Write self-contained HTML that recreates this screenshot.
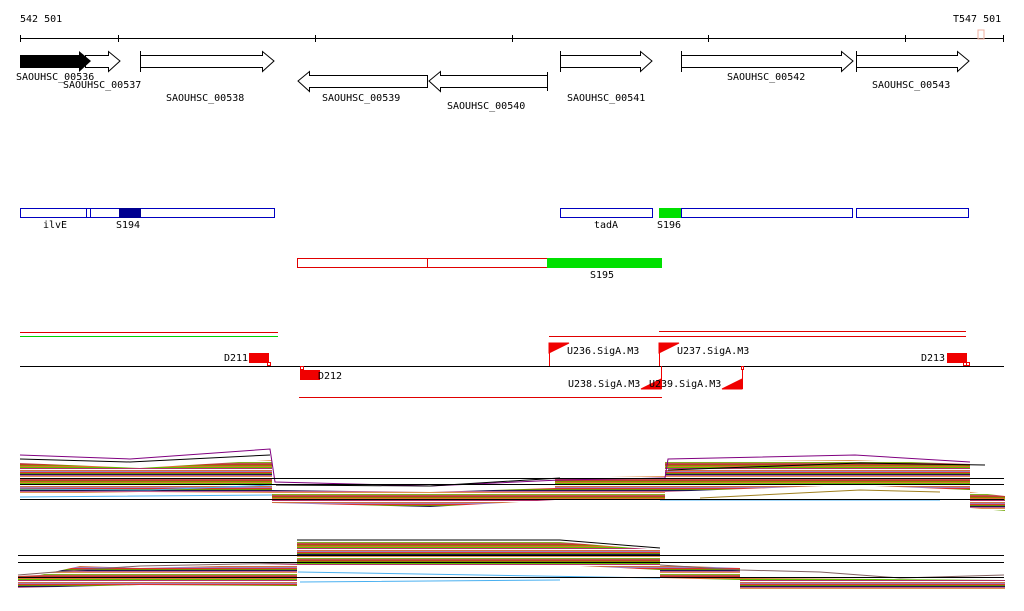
<!DOCTYPE html>
<html><head><style>
html,body{margin:0;padding:0;background:#fff;}
svg{display:block;font-family:"DejaVu Sans Mono","Liberation Mono",monospace;font-size:10px;}
</style></head><body>
<svg width="1024" height="611" viewBox="0 0 1024 611" xmlns="http://www.w3.org/2000/svg">
<defs>
<pattern id="st" width="8" height="16" patternUnits="userSpaceOnUse">
<rect width="8" height="16" fill="#d8a070"/>
<rect y="0" width="8" height="1" fill="#c0392b"/>
<rect y="1" width="8" height="1" fill="#8a8a00"/>
<rect y="2" width="8" height="1" fill="#e07030"/>
<rect y="3" width="8" height="1" fill="#60c000"/>
<rect y="4" width="8" height="1" fill="#b0306a"/>
<rect y="5" width="8" height="1" fill="#fff"/>
<rect y="6" width="8" height="1" fill="#d07040"/>
<rect y="7" width="8" height="1" fill="#a080c0"/>
<rect y="8" width="8" height="1" fill="#e03030"/>
<rect y="9" width="8" height="1" fill="#709000"/>
<rect y="10" width="8" height="1" fill="#1a1a50"/>
<rect y="11" width="8" height="1" fill="#c06090"/>
<rect y="12" width="8" height="1" fill="#e09050"/>
<rect y="13" width="8" height="1" fill="#fff"/>
<rect y="14" width="8" height="1" fill="#80b020"/>
<rect y="15" width="8" height="1" fill="#c05050"/>
</pattern>
</defs>
<!-- ruler -->
<text x="20" y="22">542 501</text>
<text x="953" y="22">T547 501</text>
<line x1="20" y1="38.5" x2="1004" y2="38.5" stroke="#000"/>
<g stroke="#000"><line x1="20.5" y1="35" x2="20.5" y2="42"/><line x1="118.5" y1="35" x2="118.5" y2="42"/><line x1="315.5" y1="35" x2="315.5" y2="42"/><line x1="512.5" y1="35" x2="512.5" y2="42"/><line x1="708.5" y1="35" x2="708.5" y2="42"/><line x1="905.5" y1="35" x2="905.5" y2="42"/><line x1="1003.5" y1="35" x2="1003.5" y2="42"/></g>
<rect x="978" y="30" width="6" height="9" fill="none" stroke="#f0b0a0"/>
<!-- genes -->
<g fill="#fff" stroke="#000">
<path d="M85.5 55.5H108.5V51.5L120 61L108.5 71.5V67.5H85.5Z"/>
<path d="M140.5 55.5H262.5V51.5L274 61L262.5 71.5V67.5H140.5Z"/>
<path d="M427.5 75.5H309.5V71.5L298 81L309.5 91.5V87.5H427.5Z"/>
<path d="M547.5 75.5H440.5V71.5L429 81L440.5 91.5V87.5H547.5Z"/>
<path d="M560.5 55.5H640.5V51.5L652 61L640.5 71.5V67.5H560.5Z"/>
<path d="M681.5 55.5H841.5V51.5L853 61L841.5 71.5V67.5H681.5Z"/>
<path d="M856.5 55.5H957.5V51.5L969 61L957.5 71.5V67.5H856.5Z"/>
</g>
<path d="M20 55H79V51L91 61L79 72V68H20Z" fill="#000"/>
<line x1="140.5" y1="51" x2="140.5" y2="72" stroke="#000"/>
<line x1="547.5" y1="72" x2="547.5" y2="91" stroke="#000"/>
<line x1="560.5" y1="51" x2="560.5" y2="72" stroke="#000"/>
<line x1="681.5" y1="51" x2="681.5" y2="72" stroke="#000"/>
<line x1="856.5" y1="51" x2="856.5" y2="72" stroke="#000"/>
<text x="16" y="80">SAOUHSC_00536</text>
<text x="63" y="88">SAOUHSC_00537</text>
<text x="166" y="101">SAOUHSC_00538</text>
<text x="322" y="101">SAOUHSC_00539</text>
<text x="447" y="109">SAOUHSC_00540</text>
<text x="567" y="101">SAOUHSC_00541</text>
<text x="727" y="80">SAOUHSC_00542</text>
<text x="872" y="88">SAOUHSC_00543</text>
<!-- boxes -->
<g fill="none" stroke="#0000c0">
<rect x="20.5" y="208.5" width="254" height="9"/>
<line x1="86.5" y1="208" x2="86.5" y2="218"/><line x1="90.5" y1="208" x2="90.5" y2="218"/>
<rect x="560.5" y="208.5" width="92" height="9"/>
<rect x="681.5" y="208.5" width="171" height="9"/>
<rect x="856.5" y="208.5" width="112" height="9"/>
</g>
<rect x="119" y="208" width="22" height="10" fill="#000090"/>
<rect x="659" y="208" width="22" height="10" fill="#00e000"/>
<text x="43" y="228">ilvE</text><text x="116" y="228">S194</text>
<text x="594" y="228">tadA</text><text x="657" y="228">S196</text>
<g fill="none" stroke="#e00000">
<rect x="297.5" y="258.5" width="250" height="9"/>
<line x1="427.5" y1="258" x2="427.5" y2="268"/>
</g>
<rect x="547" y="258" width="115" height="10" fill="#00e000"/>
<text x="590" y="278">S195</text>
<!-- regulatory -->
<line x1="20" y1="332.5" x2="278" y2="332.5" stroke="#e00000"/>
<line x1="20" y1="336.5" x2="278" y2="336.5" stroke="#00d000"/>
<line x1="659" y1="331.5" x2="966" y2="331.5" stroke="#e00000"/>
<line x1="549" y1="336.5" x2="966" y2="336.5" stroke="#e00000"/>
<line x1="20" y1="366.5" x2="1004" y2="366.5" stroke="#000"/>
<line x1="299" y1="397.5" x2="662" y2="397.5" stroke="#e00000"/>
<rect x="249" y="353" width="20" height="10" fill="#f00000"/>
<rect x="267.5" y="362.5" width="3" height="3" fill="none" stroke="#f00000"/>
<text x="224" y="361">D211</text>
<rect x="300" y="370" width="20" height="10" fill="#f00000"/>
<rect x="300.5" y="366.5" width="3" height="3" fill="none" stroke="#f00000"/>
<text x="318" y="379">D212</text>
<rect x="947" y="353" width="20" height="10" fill="#f00000"/>
<rect x="963.5" y="362.5" width="3" height="3" fill="none" stroke="#f00000"/>
<rect x="966.5" y="362.5" width="3" height="3" fill="none" stroke="#f00000"/>
<text x="921" y="361">D213</text>
<g fill="#f00000" stroke="#f00000">
<path d="M549 343H569L549 353Z"/><line x1="549.5" y1="343" x2="549.5" y2="366"/>
<path d="M659 343H679L659 353Z"/><line x1="659.5" y1="343" x2="659.5" y2="366"/>
<path d="M661 389H641L661 379Z"/><line x1="661.5" y1="366" x2="661.5" y2="389"/>
<path d="M742 389H722L742 379Z"/><line x1="742.5" y1="366" x2="742.5" y2="389"/>
</g>
<rect x="741.5" y="366.5" width="2" height="3" fill="#fff" stroke="#f00000"/>
<text x="567" y="354">U236.SigA.M3</text>
<text x="677" y="354">U237.SigA.M3</text>
<text x="568" y="387">U238.SigA.M3</text>
<text x="649" y="387">U239.SigA.M3</text>
<!-- expression top -->
<g fill="url(#st)">
<path d="M20 463L140 468L272 460L272 493L140 492L20 494Z"/>
<path d="M272 490L430 492L555 488L555 500L430 507L272 503Z"/>
<path d="M555 478L665 476L665 500L555 500Z"/>
<path d="M665 462L850 460L970 464L970 490L850 485L665 492Z"/>
<path d="M970 492L1005 496L1005 511L970 508Z"/>
</g>
<g fill="none" stroke-width="1">
<path d="M20 455L130 459L270 449L275 482L430 486L560 480L665 478L668 459L855 455L970 462" stroke="#800080"/>
<path d="M20 459L130 462L270 455" stroke="#000"/>
<path d="M20 489L150 490L272 485" stroke="#4ab0f0"/>
<path d="M20 497L272 495M660 500L940 500" stroke="#4ab0f0"/>
<path d="M668 470L860 463L985 465" stroke="#000"/>
<path d="M276 485L430 486L560 478" stroke="#000"/>
<path d="M700 498L860 490L940 492" stroke="#a08020"/>
</g>
<line x1="20" y1="478.5" x2="1004" y2="478.5" stroke="#000"/>
<line x1="20" y1="484.5" x2="1004" y2="484.5" stroke="#000"/>
<line x1="20" y1="499.5" x2="1004" y2="499.5" stroke="#000"/>
<!-- expression bottom -->
<g fill="url(#st)">
<path d="M18 576L40 575L80 566L140 568L297 564L297 586L140 585L18 588Z"/>
<path d="M297 541L560 542L660 550L660 570L560 565L297 565Z"/>
<path d="M660 565L740 568L740 580L660 578Z"/>
<path d="M740 578L1005 580L1005 590L740 590Z"/>
</g>
<g fill="none">
<path d="M298 572L660 578M300 582L560 580" stroke="#4ab0f0"/>
<path d="M660 565L740 570L820 572L900 578L1004 575" stroke="#806060"/>
<path d="M18 575L80 570L140 566L297 563" stroke="#806060"/>
<path d="M297 540L560 540L660 548" stroke="#000"/>
</g>
<line x1="18" y1="555.5" x2="1004" y2="555.5" stroke="#000"/>
<line x1="18" y1="562.5" x2="1004" y2="562.5" stroke="#000"/>
<line x1="18" y1="577.5" x2="1004" y2="577.5" stroke="#000"/>
</svg>
</body></html>
